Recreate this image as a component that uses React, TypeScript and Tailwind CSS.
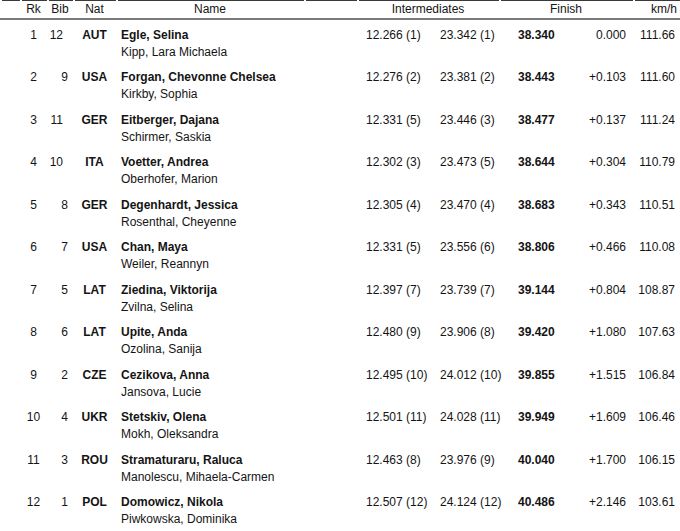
import React from 'react'

type Row = {
  rk: number
  bib: string
  nat: string
  name: string
  partner: string
  i1: string
  i2: string
  finish: string
  diff: string
  kmh: string
}

const rows: Row[] = [
  { rk: 1, bib: '12', nat: 'AUT', name: 'Egle, Selina', partner: 'Kipp, Lara Michaela', i1: '12.266 (1)', i2: '23.342 (1)', finish: '38.340', diff: '0.000', kmh: '111.66' },
  { rk: 2, bib: '9', nat: 'USA', name: 'Forgan, Chevonne Chelsea', partner: 'Kirkby, Sophia', i1: '12.276 (2)', i2: '23.381 (2)', finish: '38.443', diff: '+0.103', kmh: '111.60' },
  { rk: 3, bib: '11', nat: 'GER', name: 'Eitberger, Dajana', partner: 'Schirmer, Saskia', i1: '12.331 (5)', i2: '23.446 (3)', finish: '38.477', diff: '+0.137', kmh: '111.24' },
  { rk: 4, bib: '10', nat: 'ITA', name: 'Voetter, Andrea', partner: 'Oberhofer, Marion', i1: '12.302 (3)', i2: '23.473 (5)', finish: '38.644', diff: '+0.304', kmh: '110.79' },
  { rk: 5, bib: '8', nat: 'GER', name: 'Degenhardt, Jessica', partner: 'Rosenthal, Cheyenne', i1: '12.305 (4)', i2: '23.470 (4)', finish: '38.683', diff: '+0.343', kmh: '110.51' },
  { rk: 6, bib: '7', nat: 'USA', name: 'Chan, Maya', partner: 'Weiler, Reannyn', i1: '12.331 (5)', i2: '23.556 (6)', finish: '38.806', diff: '+0.466', kmh: '110.08' },
  { rk: 7, bib: '5', nat: 'LAT', name: 'Ziedina, Viktorija', partner: 'Zvilna, Selina', i1: '12.397 (7)', i2: '23.739 (7)', finish: '39.144', diff: '+0.804', kmh: '108.87' },
  { rk: 8, bib: '6', nat: 'LAT', name: 'Upite, Anda', partner: 'Ozolina, Sanija', i1: '12.480 (9)', i2: '23.906 (8)', finish: '39.420', diff: '+1.080', kmh: '107.63' },
  { rk: 9, bib: '2', nat: 'CZE', name: 'Cezikova, Anna', partner: 'Jansova, Lucie', i1: '12.495 (10)', i2: '24.012 (10)', finish: '39.855', diff: '+1.515', kmh: '106.84' },
  { rk: 10, bib: '4', nat: 'UKR', name: 'Stetskiv, Olena', partner: 'Mokh, Oleksandra', i1: '12.501 (11)', i2: '24.028 (11)', finish: '39.949', diff: '+1.609', kmh: '106.46' },
  { rk: 11, bib: '3', nat: 'ROU', name: 'Stramaturaru, Raluca', partner: 'Manolescu, Mihaela-Carmen', i1: '12.463 (8)', i2: '23.976 (9)', finish: '40.040', diff: '+1.700', kmh: '106.15' },
  { rk: 12, bib: '1', nat: 'POL', name: 'Domowicz, Nikola', partner: 'Piwkowska, Dominika', i1: '12.507 (12)', i2: '24.124 (12)', finish: '40.486', diff: '+2.146', kmh: '103.61' },
]

function HeadCell({ w, className = '', children }: { w: string; className?: string; children?: React.ReactNode }) {
  return (
    <div className={`${w} flex flex-col`}>
      <div className="h-px ml-[2px] bg-[#3a3a3a]" />
      <div className={`h-[17px] leading-[17px] ${className}`}>{children}</div>
    </div>
  )
}

export default function App() {
  return (
    <div
      className="w-[680px] h-[531px] bg-white text-[#141414] text-[12px] overflow-hidden"
      style={{ fontFamily: '"Liberation Sans", Arial, sans-serif' }}
    >
      <div className="flex">
        <HeadCell w="w-[20px]" />
        <HeadCell w="w-[27px]" className="text-center">Rk</HeadCell>
        <HeadCell w="w-[26px]" className="text-center">Bib</HeadCell>
        <HeadCell w="w-[43px]" className="text-center">Nat</HeadCell>
        <HeadCell w="w-[188px]" className="text-center">Name</HeadCell>
        <HeadCell w="w-[53px]" />
        <HeadCell w="w-[142px]" className="text-center">Intermediates</HeadCell>
        <HeadCell w="w-[134px]" className="text-center">Finish</HeadCell>
        <HeadCell w="w-[47px]" className="text-right pr-[3px]">km/h</HeadCell>
      </div>
      <div className="h-[2px] bg-[#7a7a7a]" />

      {rows.map((r) => (
        <div
          key={r.rk}
          className="grid h-[42.5px] pt-[6.5px] leading-[17px] grid-cols-[20px_27px_26px_43px_245px_74px_78px_67px_50px_50px]"
        >
          <div />
          <div className="text-center">{r.rk}</div>
          <div className={`text-right ${r.bib.length > 1 ? 'pr-[10px]' : 'pr-[5px]'}`}>{r.bib}</div>
          <div className="text-center font-bold">{r.nat}</div>
          <div className="pl-[5px]">
            <div className="font-bold">{r.name}</div>
            <div>{r.partner}</div>
          </div>
          <div className="pl-[5px]">{r.i1}</div>
          <div className="pl-[5px]">{r.i2}</div>
          <div className="pl-[5px] font-bold">{r.finish}</div>
          <div className="text-right pr-[4px]">{r.diff}</div>
          <div className="text-right pr-[5px]">{r.kmh}</div>
        </div>
      ))}
    </div>
  )
}
